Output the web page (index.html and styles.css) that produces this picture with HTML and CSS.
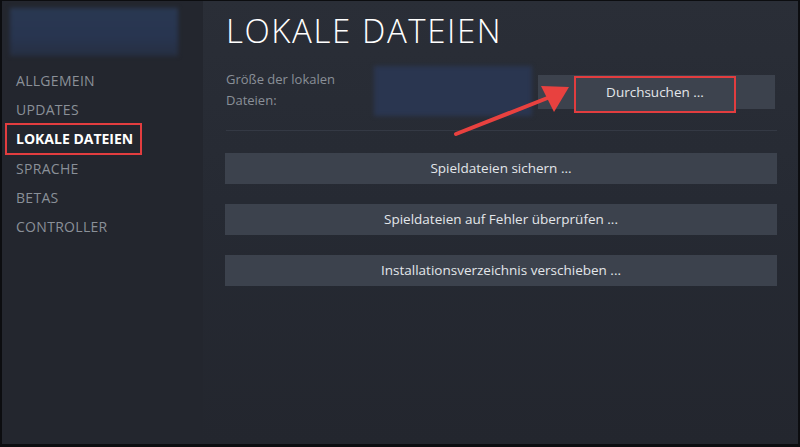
FILE: index.html
```html
<!DOCTYPE html>
<html lang="de">
    <head>
        <meta charset="UTF-8">
        <meta name="viewport" content="width=device-width, initial-scale=1.0">
        <title>Lokale Dateien</title>
        <link rel="stylesheet" href="styles.css">
    </head>
    <body>
        <div class="window">
            <div class="sidebar">
                <div class="game-cover"></div>
                <ul class="nav">
                    <li>ALLGEMEIN</li>
                    <li>UPDATES</li>
                    <li class="active"><span class="mark">LOKALE DATEIEN</span></li>
                    <li>SPRACHE</li>
                    <li>BETAS</li>
                    <li>CONTROLLER</li>
                </ul>
            </div>
            <div class="main">
                <h1>LOKALE DATEIEN</h1>
                <div class="size-row">
                    <div class="size-label">Größe der lokalen<br>Dateien:</div>
                    <div class="size-value"></div>
                    <div class="browse">
                        <span class="mark-btn">Durchsuchen ...</span>
                    </div>
                    <svg class="arrow" width="130" height="60" viewBox="0 0 130 60">
                        <line x1="6" y1="54" x2="100" y2="17" stroke="#e8413f" stroke-width="4" stroke-linecap="round"/>
                        <polygon points="119,7 91,6 104,32" fill="#e8413f"/>
                    </svg>
                </div>
                <div class="divider"></div>
                <div class="actions">
                    <div class="btn">Spieldateien sichern ...</div>
                    <div class="btn">Spieldateien auf Fehler überprüfen ...</div>
                    <div class="btn">Installationsverzeichnis verschieben ...</div>
                </div>
            </div>
        </div>
    </body>
</html>
```

FILE: styles.css
```css
html, body {
    margin: 0;
    padding: 0;
    background-color: #0c0d10;
}
body {
    font-family: "Open Sans", "Noto Sans", Arial, sans-serif;
    width: 800px;
    height: 447px;
    overflow: hidden;
}
.window {
    display: flex;
    height: 443px;
    width: 796px;
    margin: 1px 2px 3px 2px;
}
.sidebar {
    width: 201px;
    background-color: #23262e;
    padding-top: 7px;
    box-sizing: border-box;
}
.game-cover {
    margin-left: 8px;
    width: 168px;
    height: 48px;
    background: linear-gradient(180deg, #2a3852 0%, #283550 60%, #262f42 100%);
    filter: blur(2px);
}
.nav {
    list-style: none;
    margin: 10px 0 0 0;
    padding: 0;
}
.nav li {
    height: 29.2px;
    line-height: 29px;
    padding-left: 14px;
    font-size: 14px;
    color: #8a9098;
    letter-spacing: 0.3px;
}
.nav li.active {
    color: #ffffff;
    font-weight: bold;
    padding-left: 3px;
    letter-spacing: 0;
}
.mark {
    display: inline-block;
    border: 2px solid #e23d3f;
    line-height: 28px;
    margin-top: -1px;
    padding: 0 7px 0 9px;
}
.main {
    flex: 1;
    background: linear-gradient(180deg, #2a2e37 0%, #262a33 45%, #23262e 100%);
    padding: 0 21px 0 23px;
}
h1 {
    margin: 12px 0 0 0;
    font-weight: 300;
    font-size: 33px;
    letter-spacing: 1.6px;
    color: #ffffff;
    line-height: 36px;
}
.size-row {
    position: relative;
    display: flex;
    align-items: flex-start;
    margin-top: 20px;
    height: 52px;
}
.size-label {
    width: 148px;
    font-size: 13px;
    line-height: 21px;
    color: #8a9098;
}
.size-value {
    width: 158px;
    height: 50px;
    margin-top: -3px;
    background-color: #2a3650;
    filter: blur(2px);
}
.browse {
    margin-left: 6px;
    width: 237px;
    height: 34px;
    margin-top: 6px;
    background-color: #3c424d;
    display: flex;
}
.mark-btn {
    margin-left: 36px;
    margin-top: 1px;
    width: 162px;
    height: 37px;
    box-sizing: border-box;
    border: 2px solid #e23d3f;
    background-color: #3d434e;
    color: #e3e6ea;
    font-size: 13.5px;
    text-align: center;
    line-height: 29px;
}
.arrow {
    position: absolute;
    left: 224px;
    top: 11px;
}
.divider {
    height: 1px;
    background-color: #343944;
    margin-top: 9px;
}
.actions {
    display: flex;
    flex-direction: column;
    gap: 20px;
    margin-top: 22px;
}
.btn {
    height: 31px;
    line-height: 31px;
    background-color: #3c424d;
    color: #e3e6ea;
    font-size: 13.5px;
    text-align: center;
    margin-left: -1px;
}
```
